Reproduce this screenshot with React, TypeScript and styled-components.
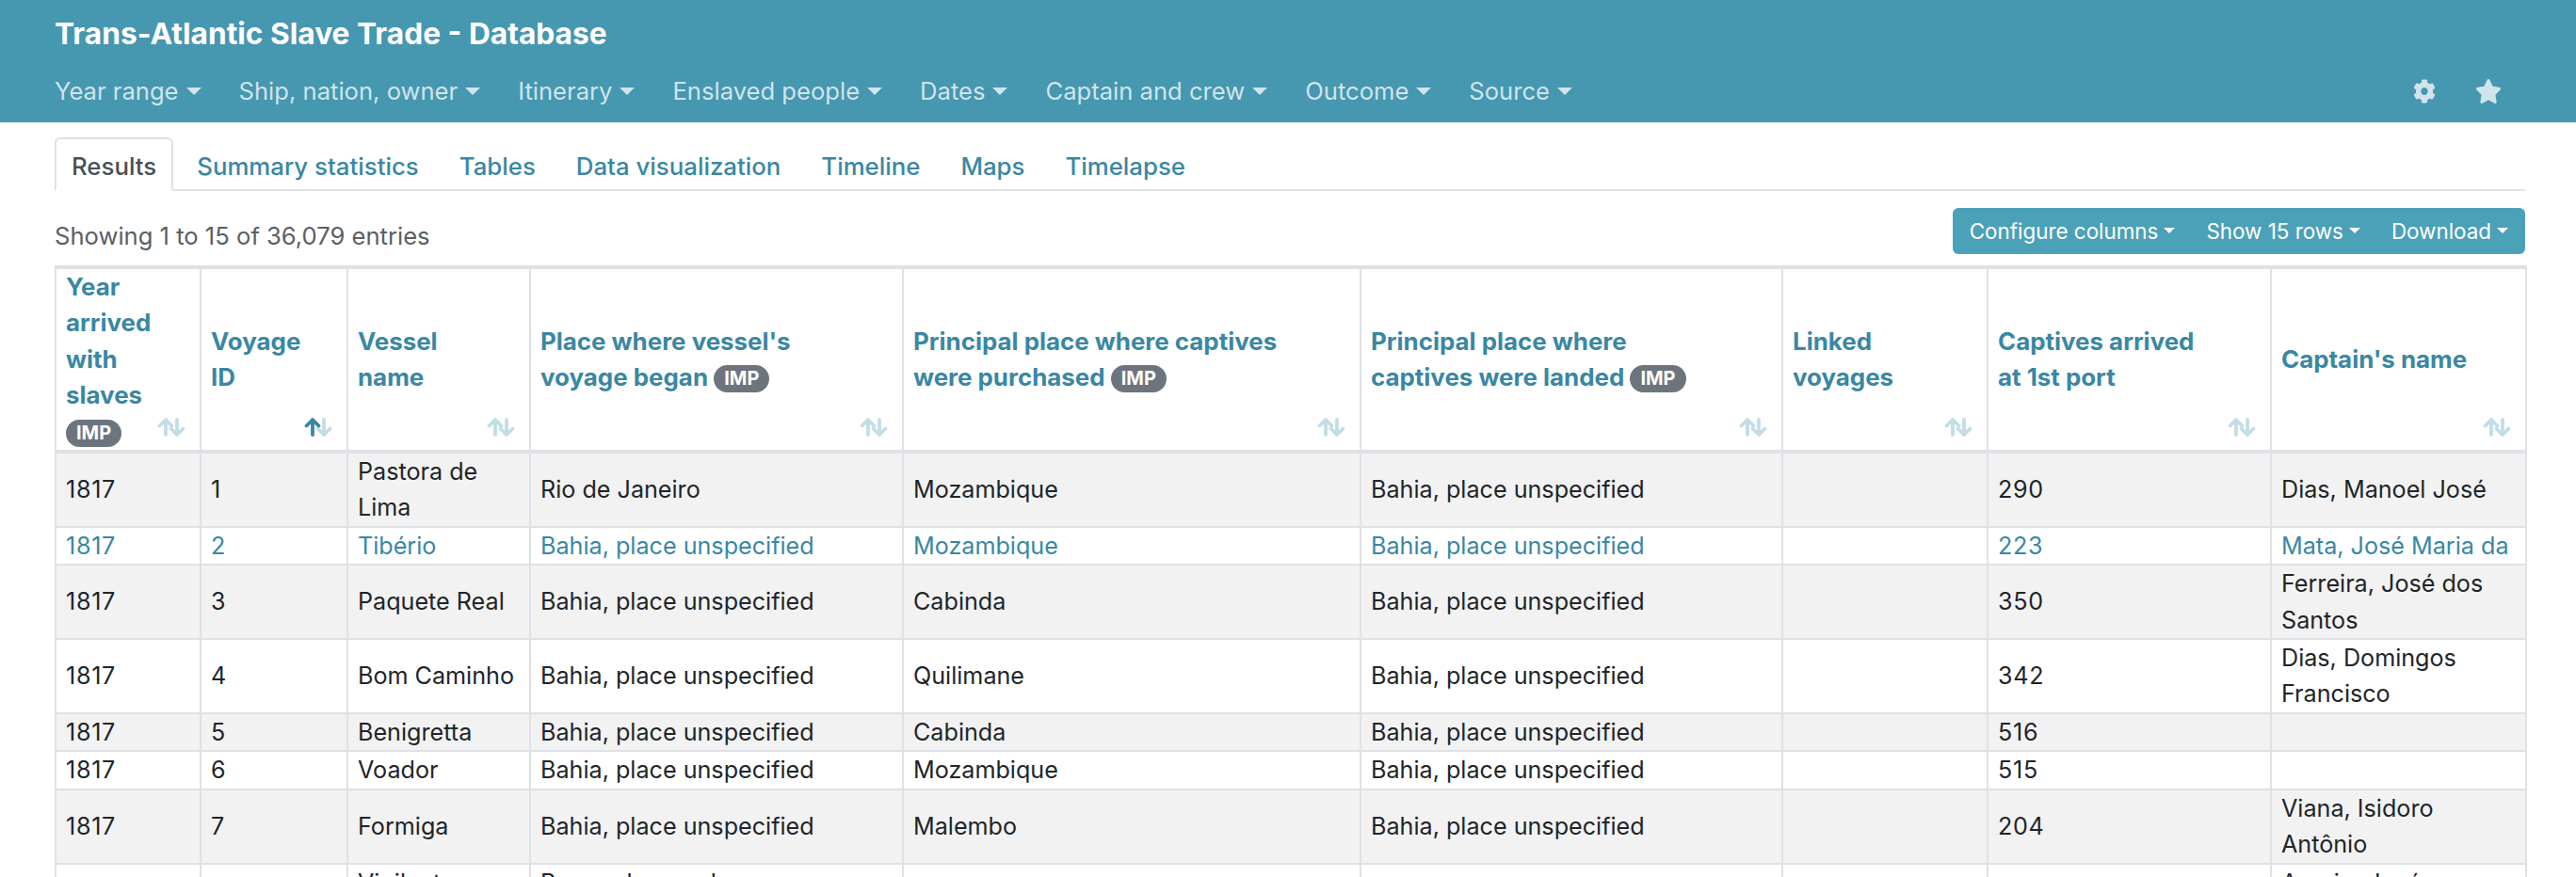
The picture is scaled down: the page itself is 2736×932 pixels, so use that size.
import React from 'react'
import styled, { createGlobalStyle } from 'styled-components'

const GlobalStyle = createGlobalStyle`
    html, body {
        margin      : 0;
        padding     : 0;
        height      : 932px;
        overflow    : hidden;
        background  : #fff;
        font-family : Inter, "Liberation Sans", sans-serif;
        font-size   : 25.2px;
        line-height : 1.5;
        color       : #212529;
    }
`

const Header = styled.header`
    height     : 130px;
    box-sizing : border-box;
    padding    : 16px 79px 0 58px;
    background : #4697b0;
`

const Title = styled.div`
    font-size   : 31.7px;
    font-weight : 700;
    line-height : 40px;
    color       : #fff;
`

const NavRow = styled.nav`
    display     : flex;
    align-items : center;
    gap         : 40px;
    margin-top  : 22px;
    height      : 38px;
`

const NavItem = styled.span`
    display     : flex;
    align-items : center;
    font-size   : 25.6px;
    color       : rgba(255, 255, 255, .75);
`

const Caret = styled.i<{ $size?: number }>`
    display      : inline-block;
    margin-left  : ${p => (p.$size ? 6 : 8)}px;
    border-top   : ${p => p.$size || 8}px solid currentColor;
    border-left  : ${p => p.$size || 8}px solid transparent;
    border-right : ${p => p.$size || 8}px solid transparent;
`

const NavIcons = styled.div`
    display     : flex;
    align-items : center;
    gap         : 42px;
    margin-left : auto;
    color       : rgba(255, 255, 255, .75);
`

const Main = styled.main`
    padding : 16px 54px 0 58px;
`

const Tabs = styled.div`
    display       : flex;
    gap           : 7px;
    height        : 57px;
    box-sizing    : border-box;
    border-bottom : 2px solid #dee2e6;
`

const Tab = styled.div<{ $active?: boolean }>`
    height        : 57px;
    box-sizing    : border-box;
    padding       : 10px 16px;
    font-size     : 25.8px;
    line-height   : 38px;
    font-weight   : 500;
    color         : ${p => (p.$active ? '#495057' : '#3a87a3')};
    border        : 2px solid ${p => (p.$active ? '#dee2e6' : 'transparent')};
    border-bottom : 2px solid ${p => (p.$active ? '#fff' : 'transparent')};
    border-radius : 6px 6px 0 0;
    background    : ${p => (p.$active ? '#fff' : 'transparent')};
`

const Toolbar = styled.div`
    display         : flex;
    justify-content : space-between;
    align-items     : center;
    height          : 79px;
    box-sizing      : border-box;
    padding-top     : 18px;
    padding-bottom  : 12px;
`

const Showing = styled.div`
    margin-top : 12px;
    font-size  : 25.6px;
    color      : #5a5f64;
`

const BtnGroup = styled.div`
    display       : flex;
    align-items   : center;
    height        : 49px;
    padding       : 0 18px;
    gap           : 33px;
    border-radius : 6px;
    background    : #4ba1b7;
`

const Btn = styled.span`
    display     : flex;
    align-items : center;
    font-size   : 22.4px;
    color       : #fff;
`

const Table = styled.table`
    width           : 2624px;
    table-layout    : fixed;
    border-collapse : collapse;
    border-top      : 4px solid #dee2e6;
`

const Th = styled.th<{ $pad: number }>`
    position       : relative;
    height         : 192px;
    padding        : 0 ${p => p.$pad}px 0 10px;
    box-sizing     : border-box;
    text-align     : left;
    vertical-align : middle;
    font-size      : 25.9px;
    font-weight    : 700;
    line-height    : 38.4px;
    color          : #3a87a3;
    border         : 2px solid #dee2e6;
    border-bottom  : 4px solid #dee2e6;
    border-top     : 0;
`

const Badge = styled.span`
    display        : inline-block;
    padding        : 0 11px;
    font-size      : 20px;
    font-weight    : 700;
    line-height    : 29px;
    border-radius  : 15px;
    color          : #fff;
    background     : #6c757d;
    vertical-align : 1px;
`

const SortIcon = styled.span`
    position : absolute;
    right    : 15px;
    bottom   : 14px;
    height   : 20px;
`

const Tr = styled.tr<{ $striped?: boolean; $hover?: boolean }>`
    background : ${p => (p.$striped ? '#f2f2f2' : '#fff')};
    color      : ${p => (p.$hover ? '#3a87a3' : '#212529')};
`

const Td = styled.td<{ $num?: boolean }>`
    padding        : 0 10px;
    font-size      : 25.15px;
    letter-spacing : ${p => (p.$num ? '.7px' : 'normal')};
    line-height    : 38.4px;
    vertical-align : middle;
    border         : 2px solid #dee2e6;
`

// pad is the right padding that gives the same line breaks as the original header
const columns = [
    { title: 'Year arrived with slaves', imp: true, width: 154, pad: 44 },
    { title: 'Voyage ID', width: 156, pad: 44 },
    { title: 'Vessel name', width: 194, pad: 44 },
    { title: "Place where vessel's voyage began", imp: true, width: 396, pad: 44 },
    { title: 'Principal place where captives were purchased', imp: true, width: 486, pad: 44 },
    { title: 'Principal place where captives were landed', imp: true, width: 448, pad: 70 },
    { title: 'Linked voyages', width: 218, pad: 44 },
    { title: 'Captives arrived at 1st port', width: 301, pad: 70 },
    { title: "Captain's name", width: 271, pad: 44 },
]

const bahia = 'Bahia, place unspecified'
const rows = [
    ['1817', '1', 'Pastora de Lima', 'Rio de Janeiro', 'Mozambique', bahia, '', '290', 'Dias, Manoel José'],
    ['1817', '2', 'Tibério', bahia, 'Mozambique', bahia, '', '223', 'Mata, José Maria da'],
    ['1817', '3', 'Paquete Real', bahia, 'Cabinda', bahia, '', '350', 'Ferreira, José dos Santos'],
    ['1817', '4', 'Bom Caminho', bahia, 'Quilimane', bahia, '', '342', 'Dias, Domingos Francisco'],
    ['1817', '5', 'Benigretta', bahia, 'Cabinda', bahia, '', '516', ''],
    ['1817', '6', 'Voador', bahia, 'Mozambique', bahia, '', '515', ''],
    ['1817', '7', 'Formiga', bahia, 'Malembo', bahia, '', '204', 'Viana, Isidoro Antônio'],
    ['1817', '8', 'Vigilante Ligeiro', 'Pernambuco, place unspecified', 'Cabinda', bahia, '', '275', 'Araujo, José Francisco'],
]

const tabs = ['Results', 'Summary statistics', 'Tables', 'Data visualization', 'Timeline', 'Maps', 'Timelapse']
const navItems = ['Year range', 'Ship, nation, owner', 'Itinerary', 'Enslaved people', 'Dates', 'Captain and crew', 'Outcome', 'Source']

const SortArrows = ({ active }: { active?: boolean }) => (
    <svg width="30" height="20" viewBox="0 0 30 20" fill="none" strokeWidth="3.8" strokeLinejoin="round" strokeLinecap="round" style={{ display: 'block' }}>
        <path stroke="#c3dde6" d="M21 2v16M14.5 11.5 21 18l6.5-6.5" />
        <path stroke={active ? '#3a87a3' : '#c3dde6'} d="M9 18V2M2.5 8.5 9 2l6.5 6.5" />
    </svg>
)

const Gear = () => (
    <svg width="24" height="26" viewBox="0 0 512 512" preserveAspectRatio="none" fill="currentColor">
        <path d="M487.4 315.7l-42.6-24.6c4.3-23.2 4.3-47 0-70.2l42.6-24.6c4.9-2.8 7.1-8.6 5.5-14-11.1-35.6-30-67.8-54.7-94.6-3.8-4.1-10-5.1-14.8-2.3L380.8 110c-17.9-15.4-38.5-27.3-60.8-35.1V25.8c0-5.6-3.9-10.5-9.4-11.7-36.7-8.2-74.3-7.8-109.2 0-5.5 1.2-9.4 6.1-9.4 11.7V75c-22.2 7.9-42.8 19.8-60.8 35.1L88.7 85.5c-4.9-2.8-11-1.9-14.8 2.3-24.7 26.7-43.6 58.9-54.7 94.6-1.7 5.4.6 11.2 5.5 14L67.3 221c-4.3 23.2-4.3 47 0 70.2l-42.6 24.6c-4.9 2.8-7.1 8.6-5.5 14 11.1 35.6 30 67.8 54.7 94.6 3.8 4.1 10 5.1 14.8 2.3l42.6-24.6c17.9 15.4 38.5 27.3 60.8 35.1v49.2c0 5.6 3.9 10.5 9.4 11.7 36.7 8.2 74.3 7.8 109.2 0 5.5-1.2 9.4-6.1 9.4-11.7v-49.2c22.2-7.9 42.8-19.8 60.8-35.1l42.6 24.6c4.9 2.8 11 1.9 14.8-2.3 24.7-26.7 43.6-58.9 54.7-94.6 1.5-5.5-.7-11.3-5.6-14.1zM256 336c-44.1 0-80-35.9-80-80s35.9-80 80-80 80 35.9 80 80-35.9 80-80 80z" />
    </svg>
)

const Star = () => (
    <svg width="28" height="26" viewBox="0 0 576 512" preserveAspectRatio="none" fill="currentColor">
        <path d="M259.3 17.8L194 150.2 47.9 171.5c-26.2 3.8-36.7 36.1-17.7 54.6l105.7 103-25 145.5c-4.5 26.3 23.2 46 46.4 33.7L288 439.6l130.7 68.7c23.2 12.2 50.9-7.4 46.4-33.7l-25-145.5 105.7-103c19-18.5 8.5-50.8-17.7-54.6L382 150.2 316.7 17.8c-11.7-23.6-45.6-23.9-57.4 0z" />
    </svg>
)

export default function App() {
    return (
        <>
            <GlobalStyle />
            <Header>
                <Title>Trans-Atlantic Slave Trade - Database</Title>
                <NavRow>
                    {navItems.map(item => (
                        <NavItem key={item}>{item}<Caret /></NavItem>
                    ))}
                    <NavIcons>
                        <Gear />
                        <Star />
                    </NavIcons>
                </NavRow>
            </Header>
            <Main>
                <Tabs>
                    {tabs.map((tab, i) => (
                        <Tab key={tab} $active={i === 0}>{tab}</Tab>
                    ))}
                </Tabs>
                <Toolbar>
                    <Showing>Showing 1 to 15 of 36,079 entries</Showing>
                    <BtnGroup>
                        <Btn>Configure columns<Caret $size={6} /></Btn>
                        <Btn>Show 15 rows<Caret $size={6} /></Btn>
                        <Btn>Download<Caret $size={6} /></Btn>
                    </BtnGroup>
                </Toolbar>
                <Table>
                    <colgroup>
                        {columns.map(col => (
                            <col key={col.title} style={{ width: col.width }} />
                        ))}
                    </colgroup>
                    <thead>
                        <tr>
                            {columns.map((col, i) => (
                                <Th key={col.title} $pad={col.pad}>
                                    {col.title}{col.imp && <> <Badge>IMP</Badge></>}
                                    <SortIcon><SortArrows active={i === 1} /></SortIcon>
                                </Th>
                            ))}
                        </tr>
                    </thead>
                    <tbody>
                        {rows.map((row, i) => (
                            <Tr key={row[1]} $striped={i % 2 === 0} $hover={i === 1}>
                                {row.map((cell, j) => (
                                    <Td key={j} $num={/^\d+$/.test(cell)}>{cell}</Td>
                                ))}
                            </Tr>
                        ))}
                    </tbody>
                </Table>
            </Main>
        </>
    )
}
